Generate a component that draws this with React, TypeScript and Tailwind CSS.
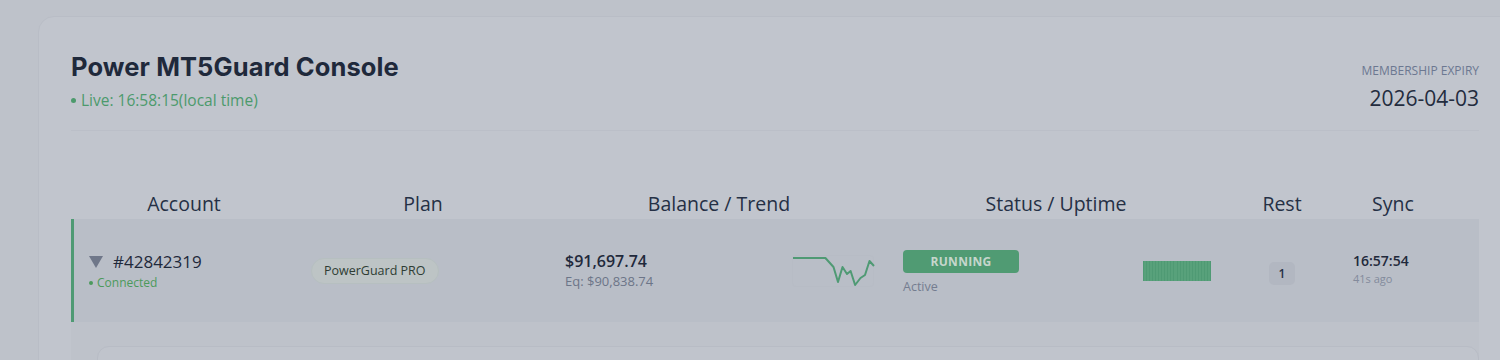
import React from 'react';

const columns = [
  { label: 'Account', width: 'w-[226px]' },
  { label: 'Plan', width: 'w-[252px]' },
  { label: 'Balance / Trend', width: 'w-[340px]' },
  { label: 'Status / Uptime', width: 'w-[334px]' },
  { label: 'Rest', width: 'w-[118px]' },
  { label: 'Sync', width: 'w-[104px]' },
];

const trend = '0,3 36,3 45,12 50,27 55,12 60,19 64,16 69,30 75,23 80,20 85,6 90,11';

const Sparkline: React.FC = () => (
  <div className="w-[82px] h-[32px] border border-[#b7bcc5] rounded-sm">
    <svg width="82" height="32" viewBox="0 0 82 32" className="block -mt-px">
      <polyline
        points={trend.split(' ').map(p => { const [x, y] = p.split(','); return `${Number(x) * 0.9},${y}`; }).join(' ')}
        fill="none"
        stroke="#4f9a74"
        strokeWidth="2"
        strokeLinejoin="round"
      />
    </svg>
  </div>
);

const UptimeBar: React.FC = () => (
  <div className="flex w-[68px] h-[20px] bg-[#4f9a74] px-[1px] gap-[1px]">
    {Array.from({ length: 22 }).map((_, i) => (
      <div key={i} className="flex-1 bg-[#58a17b]" />
    ))}
  </div>
);

export default function App() {
  return (
    <div className="w-[1500px] h-[360px] overflow-hidden bg-[#bec2ca] pt-4 pl-[38px] font-['Open_Sans',sans-serif]">
      <div className="w-[1500px] h-[400px] rounded-2xl border border-[#b9bdc6] bg-[#c1c5cd] pl-8 pt-[33px] pr-[53px]">
        {/* Header */}
        <div className="flex justify-between w-[1408px] border-b border-[#bbbfc8] pb-[18px]">
          <div>
            <h1 className="font-['Inter',sans-serif] font-bold text-[25.5px] leading-[34px] text-[#1f293b] tracking-[0.1px]">
              Power MT5Guard Console
            </h1>
            <div className="mt-[6px] flex items-center gap-[5px] text-[15.5px] leading-5 text-[#4c9a6c]">
              <span className="w-[5px] h-[5px] rounded-full bg-[#4c9a6c]" />
              Live: 16:58:15(local time)
            </div>
          </div>
          <div className="text-right pt-[13px]">
            <div className="text-[12px] leading-4 uppercase text-[#6c7891]">Membership Expiry</div>
            <div className="mt-[5px] text-[21px] leading-7 text-[#232c3e]">2026-04-03</div>
          </div>
        </div>

        {/* Table */}
        <div className="w-[1408px] mt-[57px]">
          <div className="flex h-[31px] items-center text-[19.5px] font-medium text-[#253045]">
            {columns.map(c => (
              <div key={c.label} className={`${c.width} text-center`}>{c.label}</div>
            ))}
          </div>

          <div className="flex h-[103px] items-center bg-[#b9bec7] border-l-[3px] border-[#4f9a74]">
            <div className="w-[223px] pl-[15px]">
              <div className="flex items-center gap-[10px]">
                <svg width="14" height="12" viewBox="0 0 14 12" className="block">
                  <polygon points="0,0 14,0 7,12" fill="#6f7789" />
                </svg>
                <span className="text-[17px] text-[#1f293b]">#42842319</span>
              </div>
              <div className="flex items-center gap-[4px] text-[12px] text-[#4c9a5c]">
                <span className="w-[4px] h-[4px] rounded-full bg-[#4c9a5c]" />
                Connected
              </div>
            </div>
            <div className="w-[252px] pl-[14px]">
              <span className="inline-block rounded-full bg-[#bdc4c5] border border-[#b6bfc0] px-[12px] py-[3px] text-[12.5px] text-[#2e3d34]">
                PowerGuard PRO
              </span>
            </div>
            <div className="w-[340px] pl-[16px] flex items-center">
              <div className="w-[227px]">
                <div className="text-[16px] font-semibold text-[#1f293b] leading-5">$91,697.74</div>
                <div className="text-[13px] text-[#6c7588] leading-5">Eq: $90,838.74</div>
              </div>
              <Sparkline />
            </div>
            <div className="w-[334px] pl-[14px] flex items-center">
              <div className="w-[240px] mt-[6px]">
                <div className="w-[116px] h-[23px] rounded-[4px] bg-[#509b73] text-center text-[12px] font-bold leading-[23px] text-[#c6d6cc] tracking-[0.3px]">
                  RUNNING
                </div>
                <div className="mt-[5px] text-[12.5px] text-[#747d90]">Active</div>
              </div>
              <UptimeBar />
            </div>
            <div className="w-[118px] flex justify-center pt-[6px]">
              <span className="w-[26px] h-[23px] rounded-[5px] bg-[#b2b7c1] text-center text-[12px] font-semibold leading-[23px] text-[#253045]">1</span>
            </div>
            <div className="flex-1 pl-[12px] -mt-[3px]">
              <div className="text-[14px] font-semibold text-[#1f293b] leading-5">16:57:54</div>
              <div className="text-[11px] text-[#838b9c] leading-4">41s ago</div>
            </div>
          </div>

          <div className="h-[60px] bg-[#bec2ca] pt-[24px] pl-[26px]">
            <div className="h-[40px] rounded-t-xl border border-[#b8bcc5] bg-[#c0c4cc]" />
          </div>
        </div>
      </div>
    </div>
  );
}
